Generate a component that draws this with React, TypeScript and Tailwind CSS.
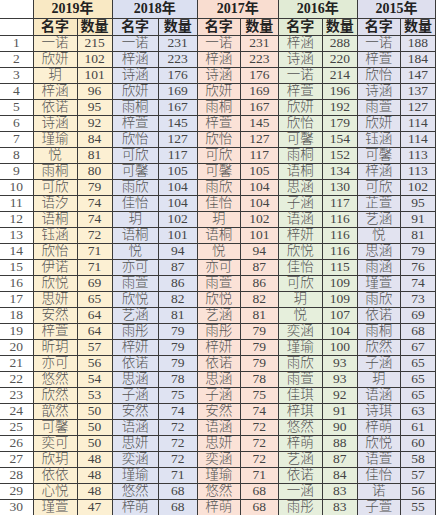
import React from 'react';

type Year = { year: string; bg: string; head: string; rows: [string, number][] };

const raw2019 = '一诺 215,欣妍 102,玥 101,梓涵 96,依诺 95,诗涵 92,瑾瑜 84,悦 81,雨桐 80,可欣 79,语汐 74,语桐 74,钰涵 72,欣怡 71,伊诺 71,欣悦 69,思妍 65,安然 64,梓萱 64,昕玥 57,亦可 56,悠然 54,欣然 53,歆然 50,可馨 50,奕可 50,欣玥 48,依依 48,心悦 48,瑾萱 47';
const raw2018 = '一诺 231,梓涵 223,诗涵 176,欣妍 169,雨桐 167,梓萱 145,欣怡 127,可欣 117,可馨 105,雨欣 104,佳怡 104,玥 102,语桐 101,悦 94,亦可 87,雨萱 86,欣悦 82,艺涵 81,雨彤 79,梓妍 79,依诺 79,思涵 78,子涵 75,安然 74,语涵 72,思妍 72,奕涵 72,瑾瑜 71,悠然 68,梓萌 68';
const raw2016 = '梓涵 288,诗涵 220,一诺 214,梓萱 196,欣妍 192,欣怡 179,可馨 154,雨桐 152,语桐 134,思涵 130,子涵 117,语涵 116,梓妍 116,欣悦 116,佳怡 115,可欣 109,玥 109,悦 107,奕涵 104,瑾瑜 100,雨欣 93,雨萱 93,佳琪 92,梓琪 91,悠然 90,梓萌 88,艺涵 87,依诺 84,一涵 83,雨彤 83';
const raw2015 = '一诺 188,梓萱 184,欣怡 147,诗涵 137,雨萱 127,欣妍 114,钰涵 114,可馨 113,梓涵 113,可欣 102,芷萱 95,艺涵 91,悦 81,思涵 79,雨涵 76,瑾萱 74,雨欣 73,依诺 69,雨桐 68,欣然 67,子涵 65,玥 65,语涵 65,诗琪 63,梓萌 61,欣悦 60,语萱 58,佳怡 57,诺 56,子萱 55';

const parse = (s: string): [string, number][] =>
    s.split(',').map(p => {
        const [n, c] = p.split(' ');
        return [n, Number(c)];
    });

const years: Year[] = [
    { year: '2019年', bg: 'bg-[#fcf0d3]', head: 'bg-[#f9e9c4]', rows: parse(raw2019) },
    { year: '2018年', bg: 'bg-[#dfe3f2]', head: 'bg-[#dbe0f1]', rows: parse(raw2018) },
    { year: '2017年', bg: 'bg-[#fbe2d7]', head: 'bg-[#f9ddd0]', rows: parse(raw2018) },
    { year: '2016年', bg: 'bg-[#e6efdc]', head: 'bg-[#e1ebd5]', rows: parse(raw2016) },
    { year: '2015年', bg: 'bg-[#e2e3f0]', head: 'bg-[#dedfee]', rows: parse(raw2015) },
];

// name / count widths per year block
const widths: [string, string][] = [
    ['w-[44px]', 'w-[35px]'],
    ['w-[46px]', 'w-[39px]'],
    ['w-[43px]', 'w-[38px]'],
    ['w-[44px]', 'w-[35px]'],
    ['w-[43px]', 'w-[35px]'],
];

const cell = 'border border-[#3a3a3a] text-center p-0 leading-none';

export default function App() {
    return (
        <div
            className="w-[440px] h-[515px] bg-white overflow-hidden text-[#333]"
            style={{ fontFamily: '"Liberation Serif", "Noto Sans CJK SC", serif' }}
        >
            <table className="border-collapse table-fixed w-[436px] text-[13.5px]">
                <colgroup>
                    <col className="w-[33px]" />
                    {widths.map(([a, b], i) => (
                        <React.Fragment key={i}>
                            <col className={a} />
                            <col className={b} />
                        </React.Fragment>
                    ))}
                </colgroup>
                <thead>
                    <tr className="h-[18px]">
                        <th className={`${cell} border-t-0 border-l-0 bg-white`} />
                        {years.map(y => (
                            <th key={y.year} colSpan={2} className={`${cell} border-t-0 ${y.head} font-bold text-[14px] text-[#222]`}>
                                {y.year}
                            </th>
                        ))}
                    </tr>
                    <tr className="h-[17px]">
                        <th className={`${cell} border-l-0 bg-white`} />
                        {years.map(y => (
                            <React.Fragment key={y.year}>
                                <th className={`${cell} ${y.head} font-bold text-[14px] text-[#222]`}>名字</th>
                                <th className={`${cell} ${y.head} font-bold text-[14px] text-[#222]`}>数量</th>
                            </React.Fragment>
                        ))}
                    </tr>
                </thead>
                <tbody>
                    {Array.from({ length: 30 }, (_, r) => (
                        <tr key={r} className="h-[16px]">
                            <td className={`${cell} border-l-0 bg-white text-[#555]`}>{r + 1}</td>
                            {years.map(y => (
                                <React.Fragment key={y.year}>
                                    <td className={`${cell} ${y.bg} text-[#555] font-light`}>{y.rows[r][0]}</td>
                                    <td className={`${cell} ${y.bg} text-[#444]`}>{y.rows[r][1]}</td>
                                </React.Fragment>
                            ))}
                        </tr>
                    ))}
                </tbody>
            </table>
        </div>
    );
}
